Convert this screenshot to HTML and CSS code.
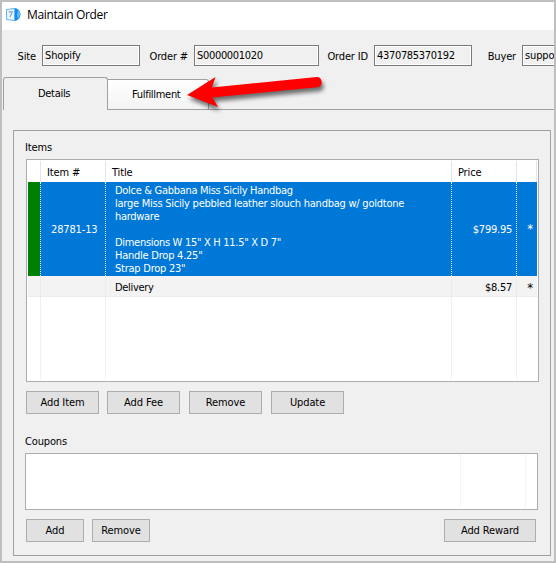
FILE: index.html
```html
<!DOCTYPE html>
<html lang="en">
<head>
<meta charset="utf-8">
<title>Maintain Order</title>
<link rel="stylesheet" href="styles.css">
</head>
<body>
<div class="window">
  <header class="titlebar">
    <svg class="app-icon" width="15" height="15" viewBox="0 0 15 15">
      <circle cx="8" cy="7.500" r="6.500" fill="#a9d8fb"/>
      <path d="M8 1a6.500 6.500 0 0 1 0 13z" fill="#168bea"/>
      <path d="M12 3q4 4 0 9l-1-4z" fill="#62bbfa"/>
      <path d="M.5 2.500 8.500 1.500v12l-8-1z" fill="#e7f4fe" stroke="#64b5f0"/>
      <path d="M3.500 5.500 6.500 4.500 4 10" fill="none" stroke="#6d94dc"/>
      <path d="M2.500 4.500h2" stroke="#e6a35f"/>
    </svg>
    <h1>Maintain Order</h1>
  </header>
  <section class="fields">
    <label class="site">Site</label><div class="field w98">Shopify</div>
    <label class="number">Order #</label><div class="field w125"><span class="digits">S0000001020</span></div>
    <label class="oid">Order ID</label><div class="field w98"><span class="digits">4370785370192</span></div>
    <label class="buyer">Buyer</label><div class="field w98">support</div>
  </section>
  <nav class="tabs">
    <div class="tab active">Details</div>
    <div class="tab">Fulfillment</div>
    <div class="tab-line"></div>
  </nav>
  <main class="panel">
    <h2>Items</h2>
    <div class="table">
      <div class="row head"><div></div><div>Item #</div><div>Title</div><div>Price</div><div></div></div>
      <div class="row selected">
        <div class="status"></div>
        <div class="sku">28781-13</div>
        <div class="desc">
          <p>Dolce &amp; Gabbana Miss Sicily Handbag</p>
          <p class="looser">large Miss Sicily pebbled leather slouch handbag w/ goldtone</p>
          <p>hardware</p>
          <p>&nbsp;</p>
          <p>Dimensions W 15" X H 11.5" X D 7"</p>
          <p class="looser">Handle Drop 4.25"</p>
          <p class="looser">Strap Drop 23"</p>
        </div>
        <div class="price">$799.95</div>
        <div class="star">*</div>
      </div>
      <div class="row alt"><div></div><div></div><div class="desc"><p>Delivery</p></div><div class="price">$8.57</div><div class="star">*</div></div>
      <div class="row empty"><div></div><div></div><div></div><div></div><div></div></div>
    </div>
    <div class="buttons items-actions">
      <button>Add Item</button><button>Add Fee</button><button>Remove</button><button>Update</button>
    </div>
    <h2 class="coupons-title">Coupons</h2>
    <div class="coupons"><div></div><div></div><div></div></div>
    <div class="buttons coupon-actions">
      <button>Add</button><button>Remove</button><button class="reward">Add Reward</button>
    </div>
  </main>
  <svg class="arrow" width="160" height="60" viewBox="180 65 160 60">
    <path d="M187 95 215.500 77 212 87.500 316.500 77A5.200 5.200 0 0 1 317.500 87.300L212.500 97.500 218 107z" fill="#f00"/>
  </svg>
</div>
</body>
</html>
```

FILE: styles.css
```css
* { box-sizing: border-box; }
body {
  margin: 0;
  overflow: hidden;
  font: 11px/13px "DejaVu Sans Condensed", "DejaVu Sans", sans-serif;
  font-stretch: condensed;
  letter-spacing: -0.15px;
  color: #000;
}
h1, h2, p { margin: 0; font-weight: normal; font-size: inherit; }
.window {
  position: relative;
  width: 556px;
  height: 563px;
  border: 2px solid #bfbfbf;
  background: #f0f0f0;
  overflow: hidden;
}
.titlebar { height: 28px; background: #fff; display: flex; align-items: center; padding: 0 0 3px 4px; gap: 6px; }
.titlebar h1 { font: 12px/16px "Open Sans", "Noto Sans", sans-serif; letter-spacing: -0.36px; padding-top: 1px; }
.app-icon { display: block; }
.fields { display: flex; padding-top: 15px; height: 47px; white-space: nowrap; }
.fields label { flex: none; padding: 5px 6px 0 0; text-align: right; }
.field { flex: none; height: 21px; border: 1px solid #7a7a7a; box-shadow: inset 0 0 0 1px #fff; padding: 3px 0 0 2px; }
.digits { letter-spacing: -0.32px; }
.w98 { width: 98px; }
.w125 { width: 125px; }
.site { width: 40px; }
.number { width: 54px; }
.oid { width: 55px; }
.buyer { width: 50px; }
.tabs { display: flex; height: 33px; align-items: flex-end; padding-left: 1px; }
.tab {
  width: 101px;
  height: 31px;
  border: 1px solid #a0a0a0;
  border-left: 0;
  border-radius: 0 3px 0 0;
  background: linear-gradient(#fff, #f3f3f3);
  padding: 8px 0 0 24px;
  letter-spacing: -0.3px;
}
.tab.active {
  width: 105px;
  height: 33px;
  border-left: 1px solid #a0a0a0;
  border-bottom: 0;
  border-radius: 3px 3px 0 0;
  background: #f0f0f0;
  padding: 9px 0 0 34px;
}
.tab-line { flex: 1; border-bottom: 1px solid #a0a0a0; }
.panel { margin: 20px 0 0 11px; width: 538px; height: 426px; border: 1px solid #a0a0a0; padding: 10px 0 0 11px; }
.panel h2 { height: 18px; }
.table { margin-left: 1px; width: 513px; height: 223px; border: 1px solid #abadb3; padding: 1px; background: #fff; display: flex; flex-direction: column; }
.row { display: grid; grid-template-columns: 13px 65px 346px 65px 20px; width: 509px; }
.row > div { border-right: 1px dotted #e5e5e5; }
.row > div:last-child { border-right-color: transparent; }
.head { height: 21px; }
.head > div { border-right: 1px solid #e5e5e5 !important; padding: 5px 0 0 6px; }
.selected { height: 94px; background: #0078d7; color: #fff; }
.selected > div { border-right-color: #fff; }
.selected .status { background: #008000; background-clip: padding-box; }
.sku { padding: 41px 0 0 10px; }
.desc { padding: 2px 0 0 9px; white-space: nowrap; letter-spacing: -0.3px; }
.looser { letter-spacing: -0.24px; }
.price { padding: 41px 4px 0 0; text-align: right; letter-spacing: -0.25px; }
.star { padding: 40px 3px 0 0; text-align: right; font-size: 13px; }
.alt { height: 21px; background: #f3f3f3; border-bottom: 1px dotted #e5e5e5; }
.alt .desc, .alt .price { padding-top: 5px; }
.alt .star { padding-top: 5px; }
.empty { flex: 1; }
.buttons { display: flex; padding-left: 1px; }
button {
  width: 73px;
  height: 23px;
  margin: 0 8px 0 0;
  padding: 0;
  border: 1px solid #adadad;
  background: #e1e1e1;
  font: inherit;
  letter-spacing: -0.1px;
  color: #000;
}
.items-actions { margin-top: 9px; }
.items-actions button:nth-child(n+2) { margin-right: 9px; }
.coupons-title { margin-top: 21px; }
.coupons { width: 513px; height: 57px; border: 1px solid #abadb3; background: #fff; display: grid; grid-template-columns: 435px 65px 11px; padding: 1px 0; }
.coupons > div:not(:last-child) { border-right: 1px dotted #e9e9e9; }
.coupon-actions { margin-top: 9px; width: 511px; }
.coupon-actions button { width: 58px; }
.coupon-actions .reward { width: 92px; margin: 0 0 0 auto; }
.arrow { position: absolute; left: 178px; top: 63px; filter: drop-shadow(2px 4px 2px rgba(0,0,0,.55)); }
```
